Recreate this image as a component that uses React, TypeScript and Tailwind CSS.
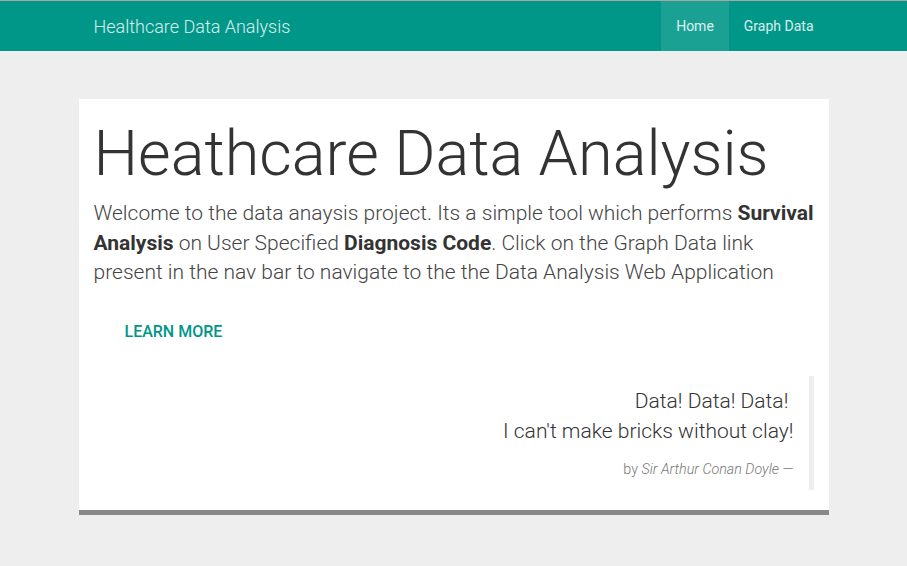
export default function App() {
  return (
    <div className="min-h-[566px] bg-[#eeeeee] font-['Roboto',sans-serif] text-[#333]">
      {/* Navbar */}
      <nav className="border-t border-[#a6a6a6] bg-[#009688]">
        <div className="mx-auto flex h-[50px] w-[750px] items-center justify-between">
          <span className="pl-[15px] text-[18px] font-light text-white/[0.84]">Healthcare Data Analysis</span>
          <ul className="flex h-full">
            <li className="flex h-full items-center bg-white/10 px-[15px] text-[14px] text-white/[0.84]">Home</li>
            <li className="flex h-full items-center px-[15px] text-[14px] text-white/[0.84]">Graph Data</li>
          </ul>
        </div>
      </nav>

      {/* Jumbotron */}
      <div className="mx-auto mt-[48px] w-[750px] border-b-[5px] border-[#888] bg-white">
        <div className="px-[15px] pt-[20px]">
          <h1 className="text-[63px] leading-[1.1] font-light text-[#333]">Heathcare Data Analysis</h1>
          <p className="mt-[11px] mr-[-6px] text-[21px] leading-[29.5px] font-light text-[#444]">
            Welcome to the data anaysis project. Its a simple tool which performs <b className="font-bold text-[#333]">Survival Analysis</b> on User Specified <b className="font-bold text-[#333]">Diagnosis Code</b>. Click on the Graph Data link present in the nav bar to navigate to the the Data Analysis Web Application
          </p>
          <div className="mt-[32px] pl-[31px]">
            <span className="text-[16px] leading-[20px] font-medium text-[#009688]">LEARN MORE</span>
          </div>
        </div>
        <div className="mt-[32px] mr-[15px] mb-[20px] ml-auto w-fit">
          <blockquote className="border-r-[5px] border-[#eee] pt-[10px] pb-[10px] pr-[15px] text-right">
            <p className="text-[21px] leading-[30px] font-light text-[#333]">
              Data! Data! Data!&nbsp;
              <br />
              I can't make bricks without clay!
            </p>
            <footer className="mt-[12px] text-[14.3px] leading-[22px] font-light text-[#777]">
              by <cite className="italic">Sir Arthur Conan Doyle</cite>&nbsp;—
            </footer>
          </blockquote>
        </div>
      </div>
    </div>
  );
}
